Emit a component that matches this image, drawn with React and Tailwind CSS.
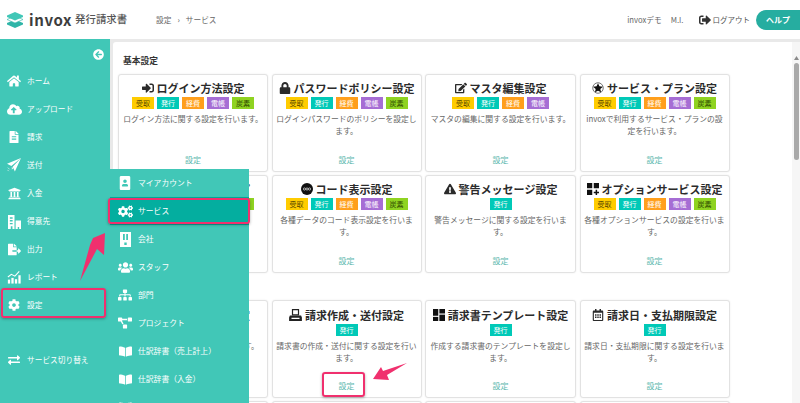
import React from 'react';
import {
  FaHome, FaCloudUploadAlt, FaFileAlt, FaUniversity, FaFileExport, FaCog,
  FaExchangeAlt, FaArrowCircleLeft, FaPortrait, FaCogs, FaUsers, FaSitemap, FaProjectDiagram,
  FaBookOpen, FaSignInAlt, FaLock, FaEdit, FaExclamationTriangle, FaRegCalendarAlt, FaSignOutAlt,
} from 'react-icons/fa';

const BADGES = {
  受取: 'bg-[#ffcc00] text-[#5a4a00]',
  発行: 'bg-[#00c9b7] text-white',
  経費: 'bg-[#ff9f1c] text-white',
  電帳: 'bg-[#a66dd4] text-white',
  炭素: 'bg-[#8fd321] text-[#2f4a00]',
};
const ALL = ['受取', '発行', '経費', '電帳', '炭素'];

function PlaneIcon() {
  return (
    <svg width="14" height="14" viewBox="0 0 16 16" fill="currentColor">
      <path d="M16 0L0 6.500l5 2.500L16 0zM16 0L6.500 10 9 15.500 16 0zM5.500 10v3.500l1.500-1.800z" />
      <path d="M1 11l2 2M.5 13.500l1.500 1.500" stroke="currentColor" strokeWidth=".7" fill="none" />
    </svg>
  );
}

function CustomerIcon() {
  return (
    <svg width="13" height="15" viewBox="0 0 14 16" fill="currentColor">
      <path d="M0 1h7v15H4.800v-3H3v3H0zM2 3.500v1.500h3V3.500zM2 6.500V8h3V6.500zM2 9.500V11h3V9.500z" fillRule="evenodd" />
      <path d="M8.200 7H14v9h-2v-2h-1.500v2H8.200z" />
    </svg>
  );
}

function ChartIcon() {
  return (
    <svg width="14" height="14" viewBox="0 0 16 16" fill="currentColor">
      <rect x="1" y="11" width="2.600" height="4.500" />
      <rect x="5" y="9" width="2.600" height="6.500" />
      <rect x="9" y="10.500" width="2.600" height="5" />
      <rect x="13" y="6" width="2.600" height="9.500" />
      <path d="M1 8l4-3 4 2 5-5.500" fill="none" stroke="currentColor" strokeWidth="1.200" />
    </svg>
  );
}

function CompanyIcon() {
  return (
    <svg width="11" height="15" viewBox="0 0 11 15">
      <path d="M0 0h11v15H0z" fill="#fff" />
      <rect x="3" y="2" width="1.800" height="6" fill="#41c7b7" />
      <rect x="6.200" y="2" width="1.800" height="6" fill="#41c7b7" />
      <rect x="4.300" y="10.500" width="2.400" height="2.500" fill="#41c7b7" />
    </svg>
  );
}

function StarIcon() {
  return (
    <svg width="12" height="12" viewBox="0 0 16 16">
      <circle cx="8" cy="8" r="7" fill="none" stroke="#333" strokeWidth=".9" />
      <path d="M8 1.500l1.900 4.200 4.600.5-3.400 3.100 1 4.500L8 11.500l-4.100 2.300 1-4.500-3.400-3.100 4.600-.5z" fill="#111" />
    </svg>
  );
}

function CodeIcon() {
  return (
    <svg width="12" height="12" viewBox="0 0 16 16">
      <circle cx="8" cy="8" r="8" fill="#111" />
      <circle cx="4.600" cy="8" r="1.500" fill="none" stroke="#fff" strokeWidth=".8" />
      <circle cx="8" cy="8" r="1.500" fill="none" stroke="#fff" strokeWidth=".8" />
      <circle cx="11.400" cy="8" r="1.500" fill="none" stroke="#fff" strokeWidth=".8" />
    </svg>
  );
}

function OptionIcon() {
  return (
    <svg width="12" height="12" viewBox="0 0 16 16" fill="#111">
      <rect x="0" y="0" width="7" height="7" />
      <rect x="9" y="0" width="7" height="7" />
      <rect x="0" y="9" width="7" height="7" />
      <path d="M11.500 9h2v2.500H16v2h-2.500V16h-2v-2.500H9v-2h2.500z" />
    </svg>
  );
}

function TemplateIcon() {
  return (
    <svg width="12" height="12" viewBox="0 0 16 16" fill="#111">
      <rect x="0" y="0" width="7" height="9" />
      <rect x="8.500" y="0" width="7.500" height="6" />
      <rect x="0" y="10.500" width="7" height="5.500" />
      <rect x="8.500" y="7.500" width="7.500" height="8.500" />
    </svg>
  );
}

// the stamp-like printer on 請求作成・送付設定
function PrinterIcon() {
  return (
    <svg width="13" height="12" viewBox="0 0 16 15" fill="#222">
      <path d="M3.500 0h9v8h-9zM5 1.500V6.500h6V1.500z" fillRule="evenodd" />
      <path d="M1 8h14l1 2.500V15H0v-4.500zM3 11v1.500h10V11z" fillRule="evenodd" />
    </svg>
  );
}

const ROW1 = [
  { icon: <FaSignInAlt size={12} />, title: 'ログイン方法設定', badges: ALL, desc: 'ログイン方法に関する設定を行います。' },
  { icon: <FaLock size={12} />, title: 'パスワードポリシー設定', badges: ALL, desc: 'ログインパスワードのポリシーを設定します。' },
  { icon: <FaEdit size={12} />, title: 'マスタ編集設定', badges: ['受取', '発行', '経費', '電帳'], desc: 'マスタの編集に関する設定を行います。' },
  { icon: <StarIcon />, title: 'サービス・プラン設定', badges: ALL, desc: 'invoxで利用するサービス・プランの設定を行います。' },
];
const ROW2 = [
  { icon: <FaCog size={12} />, title: 'データバックアップ', badges: ALL, desc: '各種データの設定を行います。' },
  { icon: <CodeIcon />, title: 'コード表示設定', badges: ALL, desc: '各種データのコード表示設定を行います。' },
  { icon: <FaExclamationTriangle size={12} />, title: '警告メッセージ設定', badges: ['発行'], desc: '警告メッセージに関する設定を行います。' },
  { icon: <OptionIcon />, title: 'オプションサービス設定', badges: ALL, desc: '各種オプションサービスの設定を行います。' },
];
const ROW3 = [
  { icon: <FaCog size={12} />, title: '発行情報の基本設定', badges: ['発行'], desc: '発行に関する基本の設定を行います。', low: true },
  { icon: <PrinterIcon />, title: '請求作成・送付設定', badges: ['発行'], desc: '請求書の作成・送付に関する設定を行います。', low: true },
  { icon: <TemplateIcon />, title: '請求書テンプレート設定', badges: ['発行'], desc: '作成する請求書のテンプレートを設定します。', low: true },
  { icon: <FaRegCalendarAlt size={12} />, title: '請求日・支払期限設定', badges: ['発行'], desc: '請求日・支払期限に関する設定を行います。', low: true },
];

const NAV = [
  { icon: <FaHome size={14} />, label: 'ホーム' },
  { icon: <FaCloudUploadAlt size={15} />, label: 'アップロード' },
  { icon: <FaFileAlt size={12} />, label: '請求' },
  { icon: <PlaneIcon />, label: '送付' },
  { icon: <FaUniversity size={13} />, label: '入金' },
  { icon: <CustomerIcon />, label: '得意先' },
  { icon: <FaFileExport size={13} />, label: '出力' },
  { icon: <ChartIcon />, label: 'レポート' },
  { icon: <FaCog size={12} />, label: '設定' },
];

const SUB = [
  { icon: <FaPortrait size={14} />, label: 'マイアカウント' },
  { icon: <FaCogs size={15} />, label: 'サービス', active: true },
  { icon: <CompanyIcon />, label: '会社' },
  { icon: <FaUsers size={15} />, label: 'スタッフ' },
  { icon: <FaSitemap size={14} />, label: '部門' },
  { icon: <FaProjectDiagram size={14} />, label: 'プロジェクト' },
  { icon: <FaBookOpen size={13} />, label: '仕訳辞書（売上計上）' },
  { icon: <FaBookOpen size={13} />, label: '仕訳辞書（入金）' },
  { icon: <FaBookOpen size={13} />, label: '' },
];

function Card({ icon, title, badges, desc, low }) {
  return (
    <div className={`h-[98px] border border-[#e2e2e2] rounded-[3px] bg-white shadow-[0_0_2px_rgba(0,0,0,0.08)] flex flex-col items-center px-[3px] pb-[5px] ${low ? 'pt-[6px]' : 'pt-[5px]'}`}>
      {title && (
        <>
          <div className="h-[16px] flex items-center gap-[3px] text-[11px] font-bold leading-none text-[#2b2b2b] whitespace-nowrap">
            {icon}
            <span>{title}</span>
          </div>
          <div className="flex gap-[3px] mt-[1px]">
            {badges.map((b) => (
              <span key={b} className={`w-[22px] h-[12px] flex items-center justify-center text-[7px] leading-none ${BADGES[b]}`}>
                {b}
              </span>
            ))}
          </div>
          <p className="mt-[4px] text-[7.800px] leading-[12px] text-[#666] text-center">{desc}</p>
          <span className="mt-auto text-[8px] leading-[12px] text-[#5bb8ae]">設定</span>
        </>
      )}
    </div>
  );
}

function Grid({ rows }) {
  return <div className="grid grid-cols-[150px_150px_151px_150px] gap-x-[3.500px]">{rows.map((c, i) => <Card key={i} {...c} />)}</div>;
}

export default function App() {
  return (
    <div className="relative w-[800px] h-[403px] overflow-hidden bg-white flex flex-col font-['Noto_Sans_CJK_JP','Noto_Sans',sans-serif]">
      <header className="h-[39px] shrink-0 flex items-center bg-white">
        <svg className="ml-[6px]" width="18" height="16" viewBox="0 0 18 16">
          <path d="M9 7.500l8 3.500v1.500L9 16 1 12.500V11z" fill="#2fb5a8" />
          <path d="M9 4l8 3.500L9 11 1 7.500z" fill="#fff" stroke="#2fb5a8" strokeWidth=".6" />
          <path d="M9 0l8 3.500v1.500L9 8.500 1 5V3.500z" fill="#41c7b7" />
        </svg>
        <span className="ml-[5px] text-[15px] font-semibold leading-none tracking-[.6px] text-[#3d3d3d]">invox</span>
        <span className="ml-[3px] text-[10.400px] font-medium leading-none text-[#555]">発行請求書</span>
        <span className="ml-[29px] text-[7.700px] text-[#666]">設定</span>
        <span className="ml-[6px] text-[7.700px] text-[#666]">›</span>
        <span className="ml-[6px] text-[7.700px] text-[#666]">サービス</span>
        <span className="ml-auto text-[7.700px] text-[#666]">invoxデモ</span>
        <span className="ml-[9px] text-[7.700px] text-[#666]">M.I.</span>
        <FaSignOutAlt className="ml-[15px] text-[#333]" size={12} />
        <span className="ml-[2px] text-[7.500px] text-[#555]">ログアウト</span>
        <span className="ml-[6px] w-[44px] h-[20px] rounded-l-full bg-[#26ada0] text-white text-[8px] font-bold flex items-center justify-center">ヘルプ</span>
      </header>

      <div className="flex-1 min-h-0 flex bg-[#e9e9e9]">
        <aside className="w-[110px] shrink-0 bg-[#41c7b7] text-white flex flex-col">
          <div className="h-[21px] flex items-end justify-end pr-[6px]">
            <FaArrowCircleLeft size={11} />
          </div>
          <nav className="mt-[7px] flex flex-col">
            {NAV.map((n) => (
              <div key={n.label} className="h-[28px] flex items-center">
                <span className="w-[27px] flex justify-center pl-[1px]">{n.icon}</span>
                <span className="text-[7.700px] leading-none">{n.label}</span>
              </div>
            ))}
          </nav>
          <div className="mt-[27px] h-[28px] flex items-center">
            <span className="w-[27px] flex justify-center pl-[1px]"><FaExchangeAlt size={12} /></span>
            <span className="text-[7.700px] leading-none">サービス切り替え</span>
          </div>
        </aside>

        <main className="flex-1 min-w-0 mt-[3px] ml-[3px] bg-white rounded-tl-[3px] flex overflow-hidden">
          <div className="w-[679px] shrink-0 pl-[5px] pt-[12px]">
            <h2 className="pl-[5px] text-[8.750px] font-bold leading-[13px] text-[#333]">基本設定</h2>
            <div className="mt-[7px] flex flex-col gap-[3px]">
              <Grid rows={ROW1} />
              <Grid rows={ROW2} />
            </div>
            <div className="mt-[27px] flex flex-col gap-[3px]">
              <Grid rows={ROW3} />
              <Grid rows={[{}, {}, {}, {}]} />
            </div>
          </div>
          <div className="w-[8px] ml-auto shrink-0 bg-[#f6f6f6] flex flex-col items-center">
            <svg className="mt-[14px]" width="5" height="4" viewBox="0 0 5 4"><path d="M2.500 0L5 4H0z" fill="#8a8a8a" /></svg>
            <div className="mt-[3px] w-[5px] h-[97px] rounded-full bg-[#a9a9a9]" />
          </div>
        </main>
      </div>

      {/* flyout menu */}
      <div className="absolute left-[110px] top-[169px] w-[139px] h-[234px] bg-[#41c7b7] text-white overflow-hidden">
        {SUB.map((s, i) => (
          <div key={i} className={`h-[28px] flex items-center ${s.active ? 'bg-[#04ae9f]' : ''}`}>
            <span className="w-[28px] pl-[2px] flex justify-center">{s.icon}</span>
            <span className="text-[7.800px] leading-none">{s.label}</span>
          </div>
        ))}
      </div>

      {/* annotations */}
      <div className="absolute left-[1px] top-[288px] w-[105px] h-[30px] border-2 border-[#f0306e] rounded-[3px] shadow-[0_1px_3px_rgba(0,0,0,0.3)]" />
      <div className="absolute left-[108px] top-[198px] w-[142px] h-[26px] border-2 border-[#f0306e] rounded-[3px] shadow-[0_1px_3px_rgba(0,0,0,0.3)]" />
      <div className="absolute left-[322px] top-[372px] w-[43px] h-[25px] border-2 border-[#f0306e] rounded-[3px] shadow-[0_1px_3px_rgba(0,0,0,0.3)]" />
      <svg className="absolute left-0 top-0 pointer-events-none" width="800" height="403">
        <path d="M80 281L90 245 93 238 105 233 104 255 97 249z" fill="#f0306e" />
        <path d="M373 379L381 367 383 371 407 363 387 375 389 380z" fill="#f0306e" />
      </svg>
    </div>
  );
}
